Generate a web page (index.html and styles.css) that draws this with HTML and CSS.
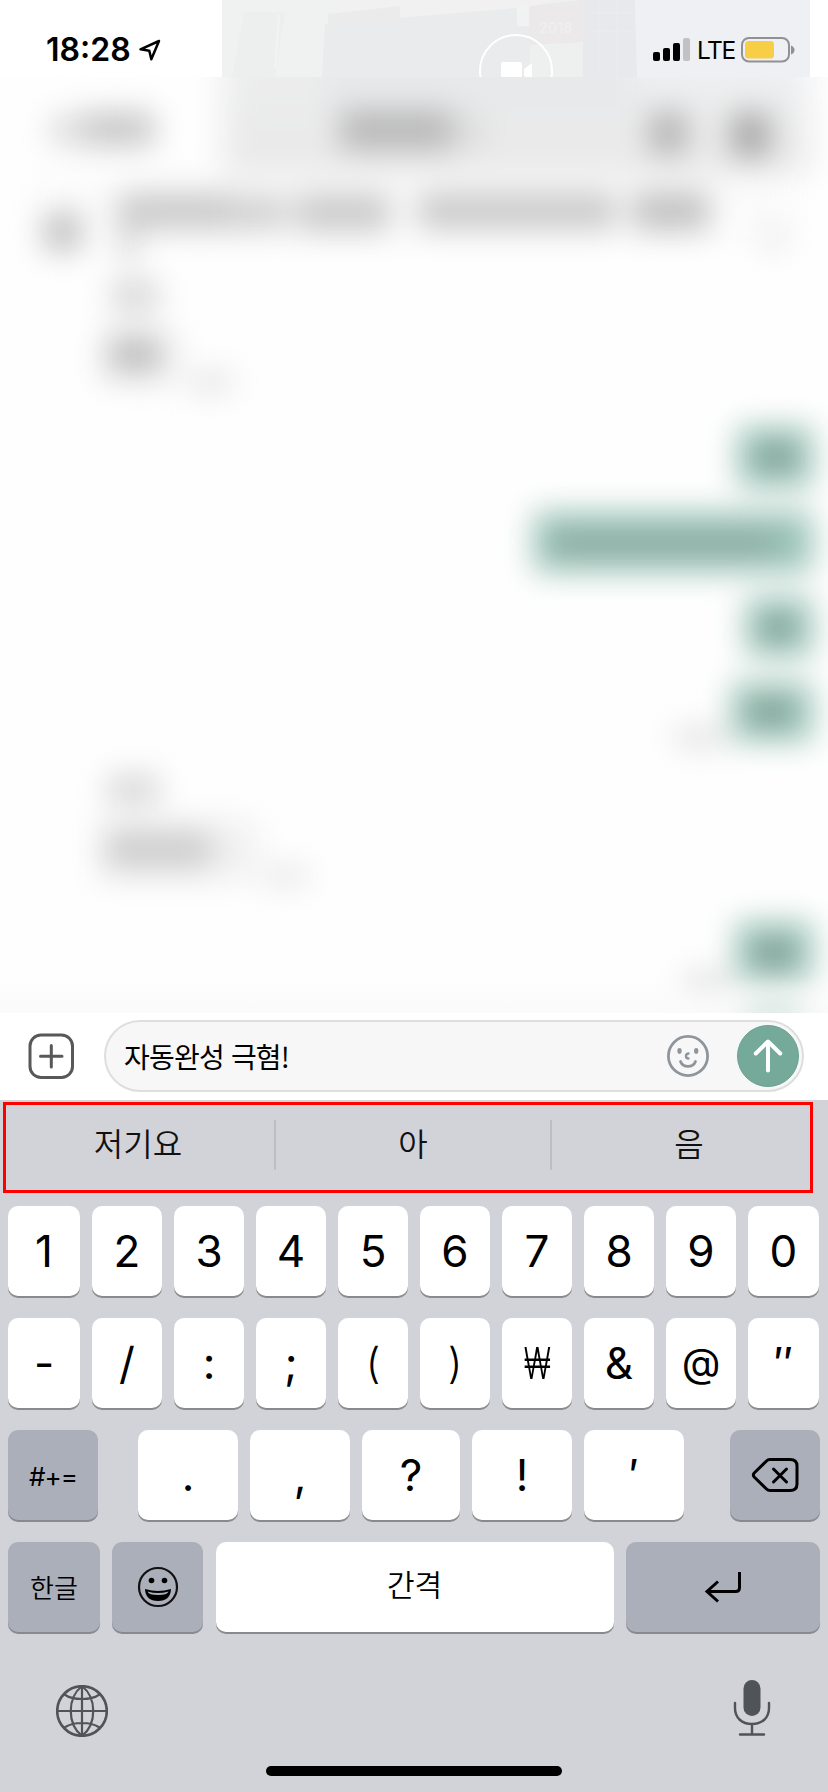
FILE: index.html
```html
<!DOCTYPE html>
<html lang="ko">
<head>
<meta charset="utf-8">
<title>메시지</title>
<link rel="stylesheet" href="styles.css">
</head>
<body>
<main class="phone">
  <header class="status">
    <svg class="status-photo" width="588" height="77" viewBox="222 0 588 77">
      <rect x="222" width="588" height="77" fill="#eeefef"/>
      <path d="M222 0H335L323 77H222Z" fill="#f0f1f1"/>
      <path d="M244 12H285L275 77H232Z" fill="#edefee"/>
      <path d="M335 0L555 0L530 8L325 24Z" fill="#f0f1f0"/>
      <path d="M325 24L530 7V77H322Z" fill="#e9ebec"/>
      <path d="M328 14L400 6V20L328 24Z" fill="#ecebeb"/>
      <path d="M530 6L583 0V42L530 45Z" fill="#ebe9ea"/>
      <path d="M517 5H529V26H517Z" fill="#f1f2f2"/>
      <path d="M583 0H635L637 77H583Z" fill="#e7e9ec"/>
      <path d="M635 0H810V77H637Z" fill="#eff0f3"/>
      <path d="M279 15L275 68" stroke="#f2f3f3" stroke-width="2" fill="none"/>
      <path d="M335 42L500 20M590 13H632M590 32H632M600 0V77M617 0V77" stroke="#ebecee" stroke-width="1" fill="none"/>
      <text class="photo-sign" x="539" y="33">2018</text>
      <circle cx="516" cy="71" r="36" fill="none" stroke="#fff" stroke-width="2"/>
      <path d="M503 62H520Q522 62 522 64V80H501V64Q501 62 503 62ZM524 69L532 63V80L524 76Z" fill="#fff"/>
    </svg>
    <span class="time">18:28</span>
    <svg class="locate" width="24" height="24" viewBox="0 0 24 24"><path d="M21 3L2.5 11.3L11.3 12.7L13.3 21.2Z" fill="none" stroke="#000" stroke-width="2.500" stroke-linejoin="round"/></svg>
    <svg class="signal" width="38" height="24" viewBox="0 0 38 24"><rect y="14" width="7" height="9" rx="2"/><rect x="10" y="10" width="7" height="13" rx="2"/><rect x="20" y="5" width="7" height="18" rx="2"/><rect x="30" width="7" height="23" rx="2" fill="#c2c2c4"/></svg>
    <span class="network">LTE</span>
    <svg class="battery" width="54" height="26" viewBox="0 0 54 26"><rect x="1" y="1" width="47" height="23.500" rx="7" fill="none" stroke="#919195" stroke-width="2"/><rect x="4" y="4" width="29" height="17.500" rx="3.500" fill="#f7ce45"/><path d="M50 8.500Q53.500 10 53.500 13T50 17.500Z" fill="#919195"/></svg>
  </header>

  <section class="chat">
    <svg width="828" height="936" viewBox="0 77 828 936">
      <defs>
        <filter id="soft" filterUnits="userSpaceOnUse" x="-60" y="0" width="950" height="1100" color-interpolation-filters="sRGB"><feGaussianBlur stdDeviation="15"/></filter>
        <linearGradient id="head" x1="0" y1="0" x2="0" y2="1"><stop offset="0" stop-color="#eeefef"/><stop offset="1" stop-color="#e9e9e9"/></linearGradient>
        <linearGradient id="foot" x1="0" y1="0" x2="0" y2="1"><stop offset="0" stop-color="#f9f9f9" stop-opacity="0"/><stop offset="1" stop-color="#f8f8f8"/></linearGradient>
      </defs>
      <rect y="77" width="828" height="936" fill="#fefefe"/>
      <g filter="url(#soft)">
        <rect x="222" y="20" width="588" height="154" fill="url(#head)"/>
        <rect x="322" y="20" width="315" height="95" fill="#e8e9eb"/>
        <rect x="635" y="20" width="175" height="80" fill="#eeeff1"/>
        <rect x="40" y="174" width="748" height="60" fill="#fbfbfb"/>
        <g fill="#c6c6c6">
          <rect x="51" y="115" width="34" height="30" fill="#dcdcdc"/>
          <rect x="85" y="112" width="69" height="34"/>
          <rect x="340" y="110" width="112" height="40" fill="#b9b9b9"/>
          <rect x="452" y="117" width="34" height="28" fill="#dcdcdc"/>
          <rect x="650" y="112" width="36" height="42" fill="#b3b3b3"/>
          <rect x="732" y="113" width="37" height="44" fill="#a6a6a6"/>
        </g>
        <g fill="#cacaca">
          <rect x="44" y="213" width="37" height="38" fill="#c0c0c0"/>
          <rect x="118" y="193" width="114" height="37"/>
          <rect x="232" y="196" width="55" height="34" fill="#d0d0d0"/>
          <rect x="296" y="194" width="94" height="38"/>
          <rect x="418" y="193" width="198" height="37"/>
          <rect x="633" y="192" width="76" height="39" fill="#c2c2c2"/>
          <rect x="118" y="230" width="20" height="30" fill="#d8d8d8"/>
          <rect x="762" y="220" width="23" height="32" fill="#ececec"/>
        </g>
        <rect x="112" y="281" width="46" height="30" fill="#d5d5d5"/>
        <rect x="100" y="330" width="78" height="55" fill="#f0f0f0"/>
        <rect x="109" y="336" width="52" height="36" fill="#c0c0c0"/>
        <rect x="190" y="371" width="42" height="22" fill="#e6e6e6"/>
        <g fill="#9bc4b8">
          <rect x="738" y="427" width="74" height="60" rx="4"/>
          <rect x="534" y="512" width="278" height="60" rx="4"/>
          <rect x="746" y="598" width="66" height="58" rx="4"/>
          <rect x="732" y="683" width="80" height="58" rx="4"/>
          <rect x="736" y="922" width="76" height="59" rx="4"/>
          <rect x="746" y="1008" width="54" height="44" rx="4"/>
        </g>
        <g fill="#7f9990">
          <rect x="759" y="446" width="34" height="22"/>
          <rect x="553" y="534" width="222" height="19" fill="#8aa59c"/>
          <rect x="764" y="617" width="28" height="22"/>
          <rect x="752" y="701" width="37" height="22"/>
          <rect x="756" y="942" width="36" height="24"/>
        </g>
        <rect x="676" y="728" width="48" height="19" fill="#e0e0e0"/>
        <rect x="685" y="972" width="44" height="20" fill="#e0e0e0"/>
        <rect x="108" y="775" width="51" height="30" fill="#d7d7d7"/>
        <rect x="98" y="820" width="158" height="60" fill="#f0f0f0"/>
        <rect x="106" y="831" width="105" height="37" fill="#cecece"/>
        <rect x="265" y="866" width="42" height="20" fill="#e7e7e7"/>
      </g>
      <rect y="977" width="828" height="36" fill="url(#foot)" opacity=".6"/>
    </svg>
  </section>

  <section class="composer">
    <svg width="47" height="47" viewBox="0 0 47 47" fill="none" stroke="#57585a" stroke-width="3"><rect x="2" y="2" width="42.500" height="42.500" rx="11"/><path d="M23.300 12.500V34M12.500 23.300H34" stroke-linecap="round"/></svg>
    <div class="field">
      <span class="message">자동완성 극혐!</span>
      <svg class="smile" width="42" height="42" viewBox="0 0 42 42" fill="none" stroke="#90959d" stroke-width="2.800" stroke-linecap="round"><circle cx="21" cy="21" r="19.600"/><path d="M13.500 26.500C16 33 26 33 28.500 26.500"/><path d="M21.500 18.500Q18.600 19 19 21.500Q19.200 23.300 21.500 23.500" stroke-width="2.400"/><path d="M12.500 15.200V16.800M29.200 15.200V16.800" stroke-width="4.300"/></svg>
      <svg class="send" width="62" height="62" viewBox="0 0 62 62"><circle cx="31" cy="31" r="30.500" fill="#75aa9b" stroke="#6ba092"/><path d="M31 45.500V17M18.800 28.500L31 16.500L43.200 28.500" fill="none" stroke="#fff" stroke-width="4" stroke-linecap="round" stroke-linejoin="round"/></svg>
    </div>
  </section>

  <section class="keyboard">
    <div class="suggestions"><span>저기요</span><span>아</span><span>음</span></div>
    <div class="keys">
      <div class="row ten"><b class="key">1</b><b class="key">2</b><b class="key">3</b><b class="key">4</b><b class="key">5</b><b class="key">6</b><b class="key">7</b><b class="key">8</b><b class="key">9</b><b class="key">0</b></div>
      <div class="row ten"><b class="key">-</b><b class="key">/</b><b class="key">:</b><b class="key">;</b><b class="key paren">(</b><b class="key paren">)</b><b class="key"><i class="won">₩</i></b><b class="key">&amp;</b><b class="key at">@</b><b class="key">″</b></div>
      <div class="row marks"><b class="key dark more">#+=</b><b class="key">.</b><b class="key">,</b><b class="key mid">?</b><b class="key">!</b><b class="key">′</b>
        <b class="key dark erase"><svg width="48" height="36" viewBox="0 0 48 36" fill="none" stroke="#000" stroke-width="3" stroke-linejoin="round" stroke-linecap="round"><path d="M18.500 2.500H39Q46 2.500 46 9V27Q46 33.500 39 33.500H19Q17 33.500 15.500 32L3.200 20Q1.500 18 3.200 16L15.500 4Q17 2.500 18.500 2.500Z"/><path d="M22.500 12L35.500 25M35.500 12L22.500 25"/></svg></b></div>
      <div class="row bottom"><b class="key dark hangul">한글</b>
        <b class="key dark"><svg width="42" height="42" viewBox="0 0 42 42"><circle cx="21" cy="21" r="19" fill="none" stroke="#111" stroke-width="2.200"/><circle cx="14.500" cy="14.500" r="2.800"/><circle cx="27.500" cy="14.500" r="2.800"/><path d="M8 23Q21 27 34 23Q33.500 35 21 35T8 23Z"/><path d="M10.500 25.500Q21 28.500 31.500 25.500Q30.500 29 21 29T10.500 25.500Z" fill="#abafba"/></svg></b>
        <b class="key space">간격</b>
        <b class="key dark enter"><svg width="40" height="34" viewBox="0 0 40 34" fill="none" stroke="#000" stroke-width="3"><path d="M36.500 2V17.500Q36.500 21.500 32.500 21.500H4M15 11.500L4 21.500L15 31.500"/></svg></b></div>
    </div>
    <footer class="tools">
      <svg width="52" height="52" viewBox="0 0 52 52" fill="none" stroke="#505358" stroke-width="2.200"><circle cx="26" cy="26" r="24.800" stroke-width="2.600"/><path d="M26 1V51M1 26H51M26 1C11 13 11 39 26 51M26 1C41 13 41 39 26 51M8.500 9.500C17 15.500 35 15.500 43.500 9.500M8.500 42.500C17 36.500 35 36.500 43.500 42.500"/></svg>
      <svg width="38" height="58" viewBox="0 0 38 58" fill="none" stroke="#505358" stroke-width="2.400" stroke-linecap="round"><rect x="10.500" y="1" width="17" height="36" rx="8.500" fill="#505358" stroke="none"/><path d="M2 24V29C2 39 9 45 19 45S36 39 36 29V24M19 45V55M7 55.500H31"/></svg>
    </footer>
    <div class="home"></div>
  </section>
</main>
</body>
</html>
```
FILE: styles.css
```css
* { box-sizing: border-box; }
body { margin: 0; background: #fff; color: #000; font-family: Inter, "Noto Sans CJK KR", sans-serif; }
svg { display: block; flex: none; }
.phone { width: 828px; height: 1792px; overflow: hidden; display: flex; flex-direction: column; }

.status { position: relative; height: 77px; display: flex; align-items: flex-start; padding: 37px 0 0 46px; }
.status > * { position: relative; }
.status .status-photo { position: absolute; left: 222px; top: 0; }
.photo-sign { font: 700 14px Inter, sans-serif; fill: #f0efef; }
.time { font-size: 32px; line-height: 26px; font-weight: 600; width: 92px; white-space: nowrap; }
.locate { margin-top: 1px; }
.signal { margin: 1px 0 0 auto; }
.network { width: 39px; margin-left: 6px; font-size: 24.500px; line-height: 27px; letter-spacing: -1.400px; font-weight: 400; }
.battery { margin: 0 33px 0 5px; }

.chat { height: 936px; }

.composer { height: 87px; display: flex; padding: 7px 24px 0 28px; background: #fff; }
.composer > svg { margin: 13px 29px 0 0; }
.field { flex: 1; height: 72px; display: flex; align-items: center; border: 2px solid #dedede; border-radius: 36px; background: #f7f7f7; padding: 0 3px 0 18px; }
.message { flex: 1; font: 400 28px/40px "Noto Sans CJK KR", sans-serif; letter-spacing: -.8px; white-space: nowrap; }
.smile { margin-right: 28px; }

.keyboard { height: 692px; background: #d1d3d9; }
.suggestions { width: 810px; height: 91px; transform: translate(3px, 2px); border: 3px solid #f00; display: grid; grid-template-columns: 269px 276px 276px; }
.suggestions span { position: relative; display: grid; place-items: center; font: 350 32px/40px "Noto Sans CJK KR", sans-serif; color: #111; padding-bottom: 12px; }
.suggestions span:first-child { padding-right: 5px; }
.suggestions span + span::before { content: ""; position: absolute; left: -1px; top: 15px; width: 2px; height: 50px; background: #bcbec2; }

.keys { display: grid; gap: 22px; padding: 15px 8px 0; }
.row { display: grid; column-gap: 12px; height: 90px; }
.ten { grid-template-columns: 72px repeat(8, 70px) 71px; }
.bottom { grid-template-columns: 92px 91px 398px 194px; column-gap: 12.300px; }
.key { display: flex; align-items: center; justify-content: center; height: 90px; border-radius: 10px; background: #fff; box-shadow: 0 2px 0 #898a8e; font-size: 44px; line-height: 54px; font-weight: 400; }
.dark { background: #abafba; }
.marks { display: flex; }
.marks .key { width: 100px; }
.marks .mid { width: 98px; }
.marks .more { width: 90px; margin-right: 28px; font-size: 26px; font-weight: 400; letter-spacing: -1px; padding-top: 4px; }
.marks .erase { width: 90px; margin-left: 34px; }
.paren { font-size: 42px; font-weight: 300; }
.at { font-size: 40px; }
.won { font-style: normal; font-weight: 300; transform: scaleX(.66); }
.hangul { font: 350 26px/40px "Noto Sans CJK KR", sans-serif; }
.space { font: 350 30px/40px "Noto Sans CJK KR", sans-serif; padding-bottom: 9px; }
.tools { display: flex; justify-content: space-between; align-items: flex-end; padding: 49px 57px 0 56px; height: 105px; }
.home { width: 296px; height: 10px; margin: 29px auto 0; border-radius: 5px; background: #000; }
```
